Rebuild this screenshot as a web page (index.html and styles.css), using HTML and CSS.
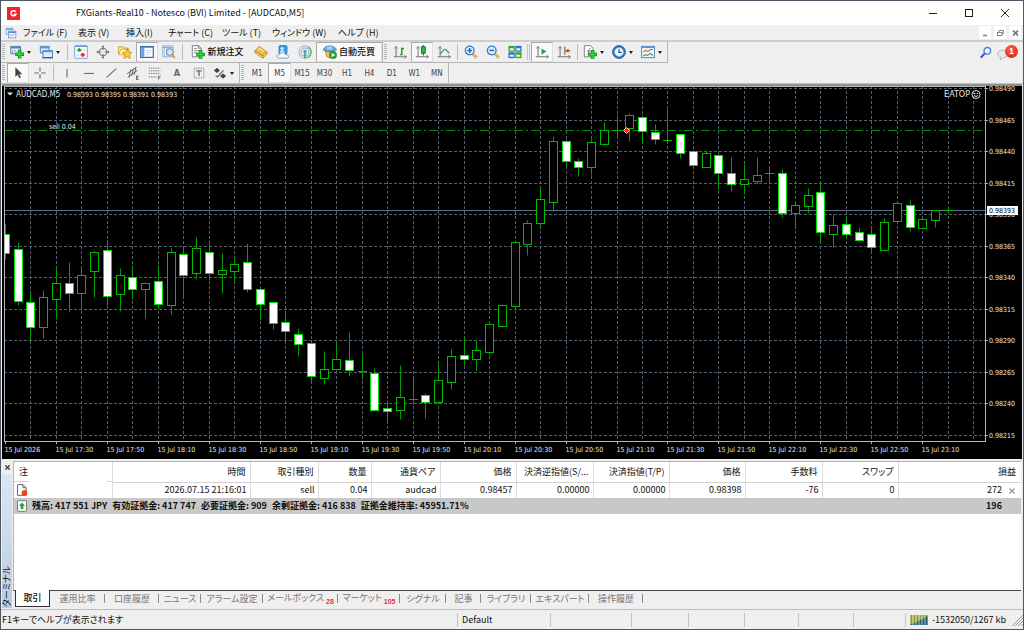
FILE: index.html
```html
<!DOCTYPE html>
<html lang="ja">
<head>
<meta charset="utf-8">
<title>FXGiants-Real10 - Notesco (BVI) Limited - [AUDCAD,M5]</title>
<link rel="stylesheet" href="styles.css">
</head>
<body>
<div class="window">
  <header class="titlebar">
    <svg class="logo" viewBox="0 0 13 13"><rect width="13" height="13" fill="#f5222a"/><path d="M8.8 4.9A2.6 2.6 0 1 0 9 7.2H6.7" fill="none" stroke="#fff" stroke-width="1.5"/></svg>
    <h1 class="title">FXGiants-Real10 - Notesco (BVI) Limited - [AUDCAD,M5]</h1>
    <div class="winctl">
      <button aria-label="最小化"><svg viewBox="0 0 10 10"><path d="M1 5.5h8" stroke="#222" fill="none"/></svg></button>
      <button aria-label="最大化"><svg viewBox="0 0 10 10"><rect x="1.5" y="1.5" width="7" height="7" stroke="#222" fill="none"/></svg></button>
      <button aria-label="閉じる"><svg viewBox="0 0 10 10"><path d="M1 1l8 8M9 1l-8 8" stroke="#222" fill="none"/></svg></button>
    </div>
  </header>

  <nav class="menubar">
    <svg class="menuicon" viewBox="0 0 16 16"><rect x="1.500" y="1.500" width="9" height="8" fill="#e8f2ff" stroke="#6fa0d8"/><path d="M1.500 3h9" stroke="#6fa0d8" stroke-width="2"/><rect x="4.500" y="5.500" width="10" height="9" fill="#f3f8ff" stroke="#5b90cf"/><path d="M4.500 7h10" stroke="#5b90cf" stroke-width="2"/><path d="M6 12l2-2 2 2 2-3" fill="none" stroke="#5b90cf"/></svg>
    <div class="menus">
      <button>ファイル (F)</button><button>表示 (V)</button><button>挿入(I)</button><button>チャート (C)</button><button>ツール (T)</button><button>ウィンドウ (W)</button><button>ヘルプ (H)</button>
    </div>
    <div class="mdictl">
      <button aria-label="チャートを最小化"><svg viewBox="0 0 12 12"><path d="M4 8.500h4" stroke="#71859b" stroke-width="1.500"/></svg></button>
      <button aria-label="チャートを元に戻す"><svg viewBox="0 0 12 12" fill="none" stroke="#71859b"><path d="M5 5V3.500h4.500v3H8"/><rect x="3.500" y="5.500" width="4.500" height="3"/></svg></button>
      <button aria-label="チャートを閉じる"><svg viewBox="0 0 12 12"><path d="M4 3.500l5 5M9 3.500l-5 5" stroke="#5c7186" stroke-width="1.600"/></svg></button>
    </div>
  </nav>

  <div class="toolbar main">
    <div class="tools framed">
      <i class="grip"></i>
      <button class="tb drop" aria-label="新規チャート"><svg class="ic" viewBox="0 0 16 16"><rect x="1" y="1.500" width="11" height="8.500" fill="#eaf3ff" stroke="#3f6fa8"/><path d="M1 3h11" stroke="#4f85c4" stroke-width="2"/><path d="M3 6v3M5.500 5v3" stroke="#789"/><path d="M11 5.500v10M6 10.500h10" stroke="#0a8a12" stroke-width="4"/><path d="M11 6.200v8.600M6.700 10.500h8.600" stroke="#2fd13a" stroke-width="2.400"/></svg></button>
      <button class="tb drop" aria-label="プロファイル"><svg class="ic" viewBox="0 0 16 16"><rect x="1.500" y="1.500" width="10" height="7.500" fill="#dcecff" stroke="#3f75b5"/><path d="M1 3h11" stroke="#5f98d8" stroke-width="2"/><rect x="4.500" y="6.500" width="11" height="8" fill="#dcecff" stroke="#3f75b5"/><path d="M4 7.500h12" stroke="#5f98d8" stroke-width="1.500"/><path d="M4 14.500h12" stroke="#2d5e98" stroke-width="1.500"/></svg></button>
      <i class="sep"></i>
      <button class="tb" aria-label="気配値表示"><svg class="ic" viewBox="0 0 16 16"><rect x=".7" y=".7" width="14.600" height="14.600" rx="1" fill="#f5faff" stroke="#6d9fd0"/><path d="M1 1.500h14" stroke="#6d9fd0" stroke-width="1.500"/><path d="M3 6l3-3 3 3-3 2z" fill="#17a32a"/><path d="M7 11l3-2.500 3 2.500-3 3z" fill="#e03a20"/><path d="M10 5.500h3M3 11.500h3" stroke="#b8c8dc"/></svg></button>
      <button class="tb" aria-label="十字カーソル"><svg class="ic" viewBox="0 0 16 16" fill="none" stroke="#777" stroke-width="1.300"><circle cx="8" cy="8" r="4.300"/><path d="M8 2v4M8 10v4M2 8h4M10 8h4"/><path d="M8 0l1.800 2.500H6.200zM8 16l1.800-2.500H6.200zM0 8l2.500-1.800v3.600zM16 8l-2.500-1.800v3.600z" fill="#777" stroke="none"/></svg></button>
      <button class="tb" aria-label="ナビゲーター"><svg class="ic" viewBox="0 0 16 16"><path d="M.5 2h5l1 1.500h5V10H.5z" fill="#ffe89c" stroke="#c99b28"/><path d="M3 5h10l-1.500 6H1z" fill="#fff3c4" stroke="#c99b28" stroke-width=".8"/><path d="M10.500 4.500l1.700 3.600 3.800.4-2.800 2.700.8 4.100-3.500-2-3.600 2 .8-4.100L5 8.500l3.800-.4z" fill="#ffc928" stroke="#b98508" stroke-width=".8"/></svg></button>
      <button class="tb on" aria-label="ターミナル"><svg class="ic" viewBox="0 0 16 16"><rect x=".8" y="1.800" width="14.400" height="12.400" fill="#fff" stroke="#3b6ea8" stroke-width="1.400"/><rect x="1.500" y="3" width="3.500" height="10.500" fill="#6aa4e6"/><path d="M1 2.500h14" stroke="#3b6ea8"/><path d="M7 6h6M7 8.500h6M7 11h4" stroke="#b9cde4"/></svg></button>
      <button class="tb" aria-label="ストラテジーテスター"><svg class="ic" viewBox="0 0 16 16"><rect x="1" y="1" width="11.500" height="12.500" fill="#f7faff" stroke="#8ba4bf"/><path d="M3 1v12M5.500 1v12M8 1v12" stroke="#9cc0e4"/><path d="M1 3h11" stroke="#d8794a"/><circle cx="9" cy="8" r="3.800" fill="#cfe8fb" fill-opacity=".9" stroke="#6792b8" stroke-width="1.200"/><path d="M11.800 11l3 4" stroke="#d99b25" stroke-width="2"/></svg></button>
      <i class="sep"></i>
      <button class="tb text order"><svg class="ic" viewBox="0 0 16 16"><path d="M1.500.7h7l3 3v9.800h-10z" fill="#fff" stroke="#6b7682"/><path d="M8.500.7v3h3" fill="none" stroke="#6b7682"/><path d="M3.500 4h3M3.500 6.500h6M3.500 9h4" stroke="#777"/><path d="M11 5.800v10M6 10.800h10" stroke="#0a8a12" stroke-width="4"/><path d="M11 6.500v8.600M6.700 10.800h8.600" stroke="#2fd13a" stroke-width="2.400"/></svg>新規注文</button>
      <button class="tb" aria-label="MetaEditor"><svg class="ic" viewBox="0 0 16 16"><path d="M1 7l5-5.500 9 7-5 4z" fill="#f0bb3c" stroke="#a8740e" stroke-width=".9"/><path d="M1 7l9 6v2L1 9zM10 12.700l5-4.200v2l-5 4.500z" fill="#fff0c0" stroke="#a8740e" stroke-width=".8"/><path d="M4 6l2.500-2.500 5 4" fill="none" stroke="#ffe28c" stroke-width="1.500"/></svg></button>
      <button class="tb" aria-label="コミュニティ"><svg class="ic" viewBox="0 0 16 16"><rect x="3.500" y=".8" width="9" height="9" rx="1" fill="#3f9fe8" stroke="#1c70b8"/><circle cx="7" cy="4" r="1.800" fill="#d8f0ff"/><path d="M4.500 9c0-4 5-4 5 0z" fill="#d8f0ff"/><path d="M2.500 15c-3-1.500-1-5 1.500-4 1-3 6-3 7 0 3.500-.5 4.500 3 2 4z" fill="#f5f8fc" stroke="#7f93ab"/></svg></button>
      <button class="tb" aria-label="シグナル"><svg class="ic" viewBox="0 0 16 16" fill="none"><circle cx="8" cy="8" r="7" fill="#eef2f5" stroke="#a9bcc9" stroke-width="1.200"/><circle cx="8" cy="8" r="4.500" stroke="#8fb0c4" stroke-width="1.200"/><path d="M11.500 2.500A6.500 6.500 0 0 1 10 14.500" stroke="#5cb868" stroke-width="1.600"/><circle cx="8" cy="7.500" r="2" fill="#4c9fdc"/><path d="M8 9v6" stroke="#35a348" stroke-width="1.800"/></svg></button>
      <button class="tb text auto on"><svg class="ic" viewBox="0 0 16 16"><path d="M2.500 6l5.500 2 5-2-1 7-4 2-4-2z" fill="#f3c344" stroke="#a67c16" stroke-width=".8"/><path d="M0 5.500C2 2 5 1 7.500 1S13 2 15.500 5c-3 3-12 3-15.500.5z" fill="#68aee0" stroke="#2d6fa8" stroke-width=".9"/><ellipse cx="7.500" cy="3.300" rx="3.500" ry="1.800" fill="#a5d3f2"/><circle cx="11.500" cy="11.500" r="4.200" fill="#1faa32" stroke="#0c7a1c" stroke-width=".6"/><path d="M10 9l4 2.500-4 2.500z" fill="#fff"/></svg>自動売買</button>
      <i class="edge"></i><i class="grip"></i>
      <button class="tb" aria-label="バーチャート"><svg class="ic" viewBox="0 0 16 16" fill="none"><path d="M3.500 2v12M1 13.500h14" stroke="#777" stroke-width="1.200"/><path d="M1.800 4l1.700-2.500L5.200 4M13 11.800l2.500 1.700L13 15.200" stroke="#777"/><path d="M8 11h2v-7h2.500M10 4v7" stroke="#14952a" stroke-width="1.600"/></svg></button>
      <button class="tb on" aria-label="ローソク足"><svg class="ic" viewBox="0 0 16 16" fill="none"><path d="M3.500 2v12M1 13.500h14" stroke="#777" stroke-width="1.200"/><path d="M1.800 4l1.700-2.500L5.200 4M13 11.800l2.500 1.700L13 15.200" stroke="#777"/><path d="M9.500 0v12" stroke="#0a7f1c" stroke-width="1.200"/><rect x="7.300" y="2" width="4.400" height="7.500" fill="#25b83b" stroke="#0a7f1c"/></svg></button>
      <button class="tb" aria-label="ラインチャート"><svg class="ic" viewBox="0 0 16 16" fill="none"><path d="M3.500 2v12M1 13.500h14" stroke="#777" stroke-width="1.200"/><path d="M1.800 4l1.700-2.500L5.200 4M13 11.800l2.500 1.700L13 15.200" stroke="#777"/><path d="M3.500 10c3-2 3.500-5 5.500-5s3 3 5 4.500" stroke="#35a348" stroke-width="1.500"/></svg></button>
      <i class="sep"></i>
      <button class="tb" aria-label="ズームイン"><svg class="ic" viewBox="0 0 16 16"><path d="M9.500 9.500l5 5" stroke="#c98f17" stroke-width="3"/><path d="M10 10l4.500 4.500" stroke="#f6d36a" stroke-width="1.400"/><circle cx="6.500" cy="6.200" r="5" fill="#ddf0ff" stroke="#2d79cf" stroke-width="1.400"/><path d="M6.500 3.500V9M3.800 6.200h5.400" stroke="#2465c4" stroke-width="1.700"/></svg></button>
      <button class="tb" aria-label="ズームアウト"><svg class="ic" viewBox="0 0 16 16"><path d="M9.500 9.500l5 5" stroke="#c98f17" stroke-width="3"/><path d="M10 10l4.500 4.500" stroke="#f6d36a" stroke-width="1.400"/><circle cx="6.500" cy="6.200" r="5" fill="#ddf0ff" stroke="#2d79cf" stroke-width="1.400"/><path d="M3.800 6.200h5.400" stroke="#2465c4" stroke-width="1.700"/></svg></button>
      <button class="tb" aria-label="整列"><svg class="ic" viewBox="0 0 16 16"><rect x=".5" y="1" width="7.200" height="6.700" fill="#3aa522"/><rect x="8.300" y="1" width="7.200" height="6.700" fill="#2f6fd0"/><rect x=".5" y="8.300" width="7.200" height="6.700" fill="#2f6fd0"/><rect x="8.300" y="8.300" width="7.200" height="6.700" fill="#3aa522"/><path d="M2 5h4.500M9.500 5H14M2 12.300h4.500M9.500 12.300H14" stroke="#e9f5ff" stroke-width="2.400"/></svg></button>
      <i class="sep double"></i>
      <button class="tb on" aria-label="自動スクロール"><svg class="ic" viewBox="0 0 16 16" fill="none"><path d="M3.500 2v12M1 13.500h14" stroke="#777" stroke-width="1.200"/><path d="M1.800 4l1.700-2.500L5.200 4M13 11.800l2.500 1.700L13 15.200" stroke="#777"/><path d="M7.500 4l5.500 3.500-5.500 3.500z" fill="#1da632"/></svg></button>
      <button class="tb" aria-label="チャートシフト"><svg class="ic" viewBox="0 0 16 16" fill="none"><path d="M3.500 2v12M1 13.500h14" stroke="#777" stroke-width="1.200"/><path d="M1.800 4l1.700-2.500L5.200 4M13 11.800l2.500 1.700L13 15.200" stroke="#777"/><path d="M9 2v9" stroke="#555" stroke-width="1.200"/><path d="M10 6.500h5" stroke="#c8401f" stroke-width="1.600"/><path d="M13 4v5l-3-2.500z" fill="#c8401f"/></svg></button>
      <i class="sep"></i>
      <button class="tb drop" aria-label="インディケータ"><svg class="ic" viewBox="0 0 16 16"><path d="M1.500.7h7l3 3v9.800h-10z" fill="#fff" stroke="#6b7682"/><path d="M5 11c2 0 1-7 3.500-7M4.500 7h4" fill="none" stroke="#666"/><path d="M11 5.800v10M6 10.800h10" stroke="#0a8a12" stroke-width="4"/><path d="M11 6.500v8.600M6.700 10.800h8.600" stroke="#2fd13a" stroke-width="2.400"/></svg></button>
      <button class="tb drop" aria-label="時間足設定"><svg class="ic" viewBox="0 0 16 16"><circle cx="8" cy="8" r="7.400" fill="#2d78c8" stroke="#174f93" stroke-width=".8"/><circle cx="8" cy="8" r="5" fill="#f0f8ff" stroke="#88bdeb"/><path d="M8 4.500V8.500h3" fill="none" stroke="#33516f" stroke-width="1.300"/></svg></button>
      <button class="tb drop" aria-label="定型チャート"><svg class="ic" viewBox="0 0 16 16"><rect x=".7" y="1.500" width="14.600" height="13" fill="#f3f8ff" stroke="#3f75b5"/><path d="M.5 2.500h15" stroke="#5f98d8" stroke-width="2"/><path d="M2.500 8l3-2 2 1.500 3-2 3-.5" fill="none" stroke="#b8763a" stroke-width="1.200"/><path d="M2.500 12.500l3-1.500 2 1 3-2.500 3 2.500" fill="none" stroke="#2f9a40" stroke-width="1.200"/></svg></button>
    </div>
    <div class="right-tools">
      <button class="tb" aria-label="検索"><svg class="ic" viewBox="0 0 16 16"><circle cx="9.500" cy="5.500" r="3.800" fill="#eef5ff" stroke="#4a7ad8" stroke-width="1.500"/><path d="M6.500 8.500L2 13.500" stroke="#3565c9" stroke-width="2.400"/></svg></button>
      <button class="tb chat" aria-label="メッセージ"><svg class="bubble" viewBox="0 0 16 14"><path d="M8 1c9 0 8 9 0 9l-4 3 .5-3.500C-1 8 0 1 8 1z" fill="#e9eaec" stroke="#a5a7ab"/></svg><span class="badge">1</span></button>
    </div>
  </div>

  <div class="toolbar lines">
    <div class="tools">
      <i class="grip"></i>
      <button class="tb on" aria-label="カーソル"><svg class="ic" viewBox="0 0 16 16"><path d="M5 1.500v11l2.500-2.500 2 4 1.800-.9-2-3.800H13z" fill="#444"/></svg></button>
      <button class="tb" aria-label="クロスヘア"><svg class="ic" viewBox="0 0 16 16"><path d="M8 1.500v5M8 9.500v5M1.500 8h5M9.500 8h5" stroke="#666" stroke-width="1.200"/></svg></button>
      <i class="sep"></i>
      <button class="tb" aria-label="垂直線"><svg class="ic" viewBox="0 0 16 16"><path d="M8 3v10" stroke="#666" stroke-width="1.200"/></svg></button>
      <button class="tb" aria-label="水平線"><svg class="ic" viewBox="0 0 16 16"><path d="M2.500 8.500h11" stroke="#666" stroke-width="1.200"/></svg></button>
      <button class="tb" aria-label="トレンドライン"><svg class="ic" viewBox="0 0 16 16"><path d="M3 13L14 3" stroke="#666" stroke-width="1.200"/></svg></button>
      <button class="tb" aria-label="チャネル"><svg class="ic" viewBox="0 0 16 16" fill="none" stroke="#555"><path d="M1 9l10-7M2 13L13 5M3.500 13L5.500 4M6.500 11l2-8M9.500 10l2-9"/><path d="M14.500 11.500H12v4h2.500M12 13.500h2"/></svg></button>
      <button class="tb" aria-label="フィボナッチ"><svg class="ic" viewBox="0 0 16 16" fill="none" stroke="#666"><path d="M1 2.500h13M1 5.500h13M1 8.500h13M1 12.500h9" stroke-dasharray="1.500 1"/><path d="M14.500 11.500H12v4M12 13.500h2"/></svg></button>
      <button class="tb letter">A</button>
      <button class="tb" aria-label="テキストラベル"><svg class="ic" viewBox="0 0 16 16" fill="none" stroke="#666"><rect x="2.500" y="2.500" width="11" height="11" stroke-dasharray="1 1"/><path d="M5 5.500h6M8 5.500v6" stroke-width="1.500"/></svg></button>
      <button class="tb drop" aria-label="矢印"><svg class="ic" viewBox="0 0 16 16"><path d="M1 5l3.500-3L8 5 4.500 8z" fill="#444"/><path d="M8 11.500l3.500-3 3.500 3-3.500 3z" fill="#444"/><path d="M3 11l2 1.500L12 5" stroke="#555" stroke-width="1.200" fill="none"/></svg></button>
    </div>
    <i class="edge"></i><i class="grip"></i>
    <div class="periods">
      <button>M1</button><button class="on">M5</button><button>M15</button><button>M30</button><button>H1</button><button>H4</button><button>D1</button><button>W1</button><button>MN</button>
    </div>
    <i class="edge"></i>
  </div>

  <main class="chart" id="chart"></main>

  <section class="terminal">
    <aside class="side"><button class="close" aria-label="閉じる"><svg viewBox="0 0 8 8"><path d="M1.500 1.500l5 5M6.500 1.500l-5 5" stroke="#222" stroke-width="1.400"/></svg></button><span class="sidename">ターミナル</span></aside>
    <div class="pane">
      <div class="sheet">
        <table>
          <colgroup><col class="c1"><col class="c2"><col class="c3"><col class="c4"><col class="c5"><col class="c6"><col class="c7"><col class="c6"><col class="c6"><col class="c7"><col class="c6"><col></colgroup>
          <thead><tr><th class="first">注</th><th>時間</th><th>取引種別</th><th>数量</th><th>通貨ペア</th><th>価格</th><th>決済逆指値(S/...</th><th>決済指値(T/P)</th><th>価格</th><th>手数料</th><th>スワップ</th><th>損益</th></tr></thead>
          <tbody>
            <tr><td class="first"><svg class="rowicon" viewBox="0 0 12 12"><path d="M1.500.7h5.500l3 3v7.600H1.500z" fill="#fff" stroke="#666"/><path d="M7 .7v3h3" fill="none" stroke="#666"/><circle cx="8.500" cy="9" r="2.900" fill="#e04a1c"/></svg></td><td>2026.07.15 21:16:01</td><td>sell</td><td>0.04</td><td>audcad</td><td>0.98457</td><td>0.00000</td><td>0.00000</td><td>0.98398</td><td>-76</td><td>0</td><td class="profit">272<button class="x" aria-label="決済"><svg viewBox="0 0 8 8"><path d="M1.500 1.500l5 5M6.500 1.500l-5 5" stroke="#999" stroke-width="1.400"/></svg></button></td></tr>
            <tr class="total"><td colspan="11" class="first"><div class="balance"><svg class="rowicon" viewBox="0 0 12 12"><rect x="1.500" y=".7" width="9" height="10.600" rx="1" fill="#fff" stroke="#777"/><path d="M6 2.500l3 3.300H7.300V9H4.700V5.800H3z" fill="#1ba32c"/></svg><span>残高: 417 551 JPY</span><span>有効証拠金: 417 747</span><span>必要証拠金: 909</span><span>余剰証拠金: 416 838</span><span>証拠金維持率: 45951.71%</span></div></td><td class="profit">196</td></tr>
          </tbody>
        </table>
      </div>
      <div class="tabs">
        <button class="active">取引</button><button>運用比率</button><button>口座履歴</button><button>ニュース</button><button>アラーム設定</button><button>メールボックス<sub>28</sub></button><button>マーケット<sub>105</sub></button><button>シグナル</button><button>記事</button><button>ライブラリ</button><button>エキスパート</button><button>操作履歴</button>
      </div>
    </div>
  </section>

  <footer class="status">
    <span>F1キーでヘルプが表示されます</span><span>Default</span><span></span><span></span><span></span><span></span><span></span><span></span>
    <span class="net"><svg viewBox="0 0 19 10"><path d="M1.500 0v10M4.500 0v10M7.500 0v10M10.500 0v10M13.500 0v10M16.500 0v10" stroke="#8a9a1c" stroke-width="2"/><path d="M1.500 9v1M4.500 8v2M7.500 6.500V10M10.500 5v5M13.500 3.500V10M16.500 1.500V10" stroke="#1c5f86" stroke-width="2"/></svg>-1532050/1267 kb<svg class="sizer" viewBox="0 0 12 12"><path d="M1 12L12 1M4 12l8-8M7 12l5-5M10 12l2-2" stroke="#9a9a9a"/></svg></span>
  </footer>
</div>
<script src="chart.js"></script>
</body>
</html>
```

FILE: styles.css
```css
* { box-sizing: border-box; }
html, body { height: 100%; margin: 0; }
body {
  font: 9px/12px "Noto Sans CJK JP", "Noto Sans", sans-serif;
  font-feature-settings: "palt";
  color: #111;
  background: #efefef;
  overflow: hidden;
}
button { font: inherit; font-feature-settings: inherit; color: inherit; background: none; border: 0; padding: 0; margin: 0; }
svg { display: block; }

.window {
  height: 100%;
  display: grid;
  grid-template-rows: 24px 17px 21px 21px minmax(0, 1fr) 149px 19px;
  grid-template-columns: minmax(0, 1fr);
  border: 1px solid #4c5864;
  background: #efefef;
}

.titlebar { display: flex; align-items: center; background: #fff; padding-left: 6px; }
.logo { width: 13px; height: 13px; }
.title { margin: 0 0 0 56px; font-size: 9px; font-weight: 400; flex: 1; white-space: nowrap; font-feature-settings: normal; }
.winctl { display: flex; }
.winctl button { width: 36px; height: 24px; display: grid; place-items: center; }
.winctl svg { width: 10px; height: 10px; }

.menubar { display: flex; align-items: center; border-bottom: 2px solid #cdcdcd; padding-left: 4px; }
.menuicon { width: 12px; height: 12px; }
.menus { flex: 1; margin-left: 6px; display: grid; grid-template-columns: 55px 48px 42px 54px 50px 66px auto; white-space: nowrap; text-align: left; }
.menus button { text-align: left; }
.mdictl { display: flex; gap: 3px; padding-right: 2px; }
.mdictl button { width: 12px; height: 13px; background: #fff; display: grid; place-items: center; }
.mdictl svg { width: 12px; height: 12px; }

.toolbar { display: flex; align-items: stretch; }
.toolbar.lines { border-bottom: 1px solid #c2c2c2; }
.tools { display: flex; align-items: stretch; }
.tools.framed { border: solid #b4b4b4; border-width: 0 1px 1px 0; }
.grip { flex: none; width: 3px; margin: 2px 2px 2px 1px; background: repeating-linear-gradient(#b5b5b5 0 1px, #efefef 1px 2px); }
.sep { flex: none; width: 1px; margin: 2px; background: #bcbcbc; }
.sep.double { width: 3px; margin: 2px 1px; background: none; border: solid #c4c4c4; border-width: 0 1px; }
.edge { flex: none; width: 1px; background: #b4b4b4; }
.tb { flex: none; width: 22px; display: flex; align-items: center; justify-content: center; }
.ic { flex: none; width: 14px; height: 14px; }
.tb.on, .periods .on { background: #f9f9f9; border: 1px solid; border-color: #a9a9a9 #dedede #dedede #a9a9a9; }
.tb.drop { width: 29px; justify-content: flex-start; gap: 3px; padding-left: 3px; }
.tb.drop::after { content: ""; border: solid transparent; border-width: 3px 2px 0; border-top-color: #222; }
.tb.text { gap: 2px; white-space: nowrap; font-weight: 500; }
.tb.order { width: 65px; }
.tb.auto { width: 66px; }
.letter { font: bold 9px/12px "DejaVu Sans Condensed", sans-serif; color: #666; }

.right-tools { margin-left: auto; display: flex; align-items: center; }
.chat { position: relative; width: 26px; height: 20px; justify-content: flex-start; }
.bubble { width: 13px; height: 12px; margin-top: 4px; }
.badge { position: absolute; right: 5px; top: 2px; width: 13px; height: 13px; border-radius: 50%; background: radial-gradient(circle at 40% 30%, #f0604a, #cf2412); color: #fff; font: bold 9px/13px "Liberation Sans", sans-serif; text-align: center; }

.periods { display: grid; grid-template-columns: repeat(9, 1fr); width: 202px; }
.periods button { font: 8px/10px "DejaVu Sans Condensed", sans-serif; color: #444; padding-top: 2px; }

.chart { margin: 0 1px 2px; background: #000; border-top: 2px solid #8d938c; overflow: hidden; min-height: 0; }
.chart svg { width: 100%; height: 100%; }
.chart text { font: 7px "DejaVu Sans Condensed", sans-serif; fill: #e6e6e6; }
.chart .name { font-size: 8px; }
.chart .expert { font: 8px "DejaVu Sans", sans-serif; }
.chart .now { fill: #000; }
.grid { stroke: #53616d; stroke-dasharray: 3 2; fill: none; }
.axis { stroke: #b5b5b5; fill: none; }
.position { stroke: #0a860a; stroke-dasharray: 9 3 2 3; }
.price { stroke: #5d7180; }
.wick { stroke: #00a000; }
.bull { fill: #000; stroke: #00b800; }
.bear { fill: #fff; stroke: #00e000; }

.terminal { display: flex; border-bottom: 1px solid #bdbdbd; }
.side { width: 12px; display: flex; flex-direction: column; align-items: center; padding: 0 1px 1px; }
.close { height: 13px; display: grid; place-items: center; }
.close svg { width: 7px; height: 7px; }
.sidename { flex: 1; width: 10px; writing-mode: vertical-rl; text-orientation: sideways; transform: rotate(180deg); background: linear-gradient(#bccbdd, #d9e7f5); line-height: 10px; white-space: nowrap; padding-top: 1px; }
.pane { flex: 1; min-width: 0; display: flex; flex-direction: column; padding-right: 2px; }
.sheet { flex: 1; background: #fff; border: solid #b3b3b3; border-width: 1px 0 0 1px; border-bottom: 1px solid #444; }
table { width: 100%; table-layout: fixed; border-collapse: collapse; }
.c1 { width: 98px; } .c2 { width: 138px; } .c3 { width: 68px; } .c4 { width: 53px; } .c5 { width: 69px; } .c6 { width: 76px; } .c7 { width: 77px; }
th, td { padding: 0 3px 0 0; text-align: right; font-weight: 400; white-space: nowrap; border-right: 1px solid #dcdcdc; overflow: hidden; }
th { height: 20px; padding-right: 4px; border-bottom: 1px solid #d3d3d3; }
th.first { text-align: left; padding-left: 5px; border-bottom: 0; background: linear-gradient(90deg, #d3d3d3 15px, transparent 15px 93px, #d3d3d3 93px) bottom / 100% 1px no-repeat; }
td { height: 16px; }
td.first { text-align: left; padding-left: 2px; }
th:last-child, td:last-child { border-right: 0; padding-right: 5px; }
.rowicon { width: 12px; height: 12px; }
.profit svg { width: 8px; height: 8px; }
.profit .x { display: inline-block; vertical-align: middle; margin-left: 6px; }
.total { background: #c8c8c8; font-weight: 700; }
.total td { border: 0; font-weight: 700; }
.total td.profit:last-child { padding-right: 19px; }
.balance { display: flex; align-items: center; gap: 5px; }
.balance .rowicon { margin-right: -1px; }

.tabs { height: 18px; display: grid; grid-template-columns: 35px 55px 54px 42px 62px 75px 62px 46px 35px 50px 58px 54px; padding-left: 2px; color: #777; }
.tabs button { position: relative; white-space: nowrap; height: 15px; background: linear-gradient(#888, #888) right center / 1px 9px no-repeat; }
.tabs .active { background: #fff; color: #111; border: 1px solid #333; border-top: 0; margin-top: -1px; height: 17px; font-weight: 500; }
.tabs sub { font: bold 7px/7px "Liberation Sans", sans-serif; color: #e8303a; vertical-align: -3px; margin-left: 2px; }

.status { display: grid; grid-template-columns: minmax(0, 1fr) 93px 81px 57px 56px 54px 55px 52px 118px; align-items: center; white-space: nowrap; }
.status span { line-height: 14px; height: 14px; padding-left: 4px; border-left: 1px solid #c4c4c4; }
.status span:first-child { border: 0; padding-left: 1px; }
.net { display: flex; align-items: center; gap: 3px; }
.net svg { width: 19px; height: 10px; }
.net .sizer { width: 12px; height: 12px; margin-left: auto; }
```

FILE: chart.js
```js
// Each bar: [high, body top, body bottom, low, kind]; kind is w (down), b (up) or d (flat).
// Levels count downwards from LEVEL_TOP, which stands for 0.98490.
const BARS = [
[223,234,253,259,'w'],[242,249,301,305,'w'],[292,302,327,340,'w'],[290,297,327,338,'b'],[268,283,299,319,'b'],
[262,283,293,312,'w'],[268,275,293,309,'b'],[250,252,271,297,'b'],[240,250,296,305,'w'],[268,275,294,311,'b'],
[265,277,289,299,'w'],[282,283,289,318,'b'],[265,281,304,308,'w'],[248,252,305,314,'b'],[248,254,275,298,'w'],
[237,248,273,279,'b'],[244,252,273,280,'w'],[253,270,274,293,'b'],[259,264,271,281,'b'],[243,262,289,292,'w'],
[286,289,304,320,'w'],[302,302,323,329,'w'],[313,322,331,340,'w'],[328,334,344,356,'w'],[343,343,376,383,'w'],
[351,369,378,384,'b'],[343,359,369,370,'b'],[332,360,370,376,'w'],[354,371,371,379,'d'],[368,373,410,411,'w'],
[403,408,411,422,'w'],[365,397,410,419,'b'],[378,399,399,404,'d'],[393,395,402,418,'w'],[362,380,402,402,'b'],
[349,356,382,389,'b'],[337,355,359,365,'w'],[341,350,359,370,'b'],[321,324,352,352,'b'],[304,305,326,327,'b'],
[240,242,306,307,'b'],[220,223,244,255,'b'],[187,199,223,226,'b'],[136,141,202,211,'b'],[139,141,161,166,'w'],
[158,161,167,176,'w'],[139,142,167,175,'b'],[122,130,144,145,'b'],[115,130,130,136,'d'],[113,115,128,141,'b'],
[115,117,131,143,'w'],[124,132,139,144,'w'],[109,140,140,142,'d'],[134,134,153,158,'w'],[150,151,165,167,'w'],
[150,153,167,168,'b'],[152,155,173,189,'w'],[157,173,184,191,'w'],[164,179,184,194,'b'],[157,175,181,184,'b'],
[168,173,173,183,'d'],[169,173,213,217,'w'],[203,205,213,227,'b'],[188,195,206,213,'b'],[183,192,232,242,'w'],
[214,225,234,247,'b'],[216,224,234,238,'w'],[227,232,240,241,'w'],[228,234,247,251,'w'],[218,222,250,250,'b'],
[201,203,221,223,'b'],[200,205,227,231,'w'],[217,219,228,228,'b'],[210,210,220,227,'b'],[208,210,210,213,'d']
];
const TIMES = ['2026', '17:30', '17:50', '18:10', '18:30', '18:50', '19:10', '19:30', '19:50', '20:10',
  '20:30', '20:50', '21:10', '21:30', '21:50', '22:10', '22:30', '22:50', '23:10'];
const LEVEL_TOP = 88, LEVEL_SPAN = 347;
const host = document.getElementById('chart');

function draw() {
  const W = host.clientWidth, H = host.clientHeight;
  const left = 2, right = W - 37, bottom = H - 18, top = 2;
  const step = (right - left) / 77;
  const X = i => Math.round(left + 1 + i * step) + 0.5;
  const Y = v => Math.round(top + (v - LEVEL_TOP) * (bottom - 6 - top) / LEVEL_SPAN) + 0.5;
  const svg = document.createElementNS('http://www.w3.org/2000/svg', 'svg');
  const add = (tag, attrs, text) => {
    const el = document.createElementNS(svg.namespaceURI, tag);
    for (const k in attrs) el.setAttribute(k, attrs[k]);
    if (text) el.textContent = text;
    svg.appendChild(el);
  };
  const line = (cls, x1, y1, x2, y2) => add('path', { class: cls, d: `M${x1} ${y1}L${x2} ${y2}` });

  for (let i = 2; i < 77; i += 2) line('grid', X(i), 0, X(i), bottom);
  for (let k = 0; k < 12; k++) {
    const y = Y(LEVEL_TOP + k * LEVEL_SPAN / 11);
    line('grid', left, y, right, y);
    line('axis', right, y, right + 3, y);
    add('text', { x: right + 4, y: y + 2.5 }, '0.' + (98490 - k * 25));
  }
  line('position', left, Y(130), right, Y(130));
  line('price', left, Y(210), right, Y(210));

  BARS.forEach(([h, t, b, l, kind], i) => {
    line('wick', X(i), Y(h), X(i), Y(l));
    if (kind === 'd') line('bull', X(i) - 4.5, Y(t), X(i) + 4.5, Y(t));
    else add('rect', { class: kind === 'w' ? 'bear' : 'bull', x: X(i) - 4, y: Y(t), width: 8, height: Math.max(1, Y(b) - Y(t)) });
  });
  add('path', { d: `M${X(49) - 3} ${Y(127)}l3 3-3 3-3-3z`, fill: '#ff2020', stroke: '#ffd0c0' });

  add('rect', { x: 0, y: 0, width: left, height: H, fill: '#000' });
  line('axis', left + 0.5, 1, left + 0.5, bottom);
  line('axis', left, 0.5, right, 0.5);
  line('axis', right + 0.5, 0, right + 0.5, bottom);
  line('axis', left, bottom + 0.5, right + 1, bottom + 0.5);

  TIMES.forEach((time, n) => {
    const x = X(n * 4);
    line('axis', x, bottom, x, bottom + 3);
    add('text', { x: x - 1, y: bottom + 11 }, '15 Jul ' + time);
  });

  add('path', { d: 'M5 6.500h6l-3 3z', fill: '#e6e6e6' });
  add('text', { class: 'name', x: 14, y: 11 }, 'AUDCAD,M5');
  add('text', { x: 65, y: 11 }, '0.98393 0.98395 0.98391 0.98393');
  add('text', { x: 47, y: Y(130) - 2 }, 'sell 0.04');
  add('text', { class: 'expert', x: right - 15, y: 11, 'text-anchor': 'end' }, 'EATOP');
  add('circle', { cx: right - 9, cy: 8.5, r: 4, fill: 'none', stroke: '#e6e6e6' });
  add('path', { d: `M${right - 11} 9.500q2 2 4 0M${right - 11} 7.500h1.300M${right - 8.300} 7.500h1.300`, fill: 'none', stroke: '#e6e6e6' });
  add('rect', { x: right + 2, y: Y(210) - 4.5, width: 31, height: 9, fill: '#fff' });
  add('text', { class: 'now', x: right + 4, y: Y(210) + 2.5 }, '0.98393');
  host.replaceChildren(svg);
}
draw();
addEventListener('resize', draw);
```
